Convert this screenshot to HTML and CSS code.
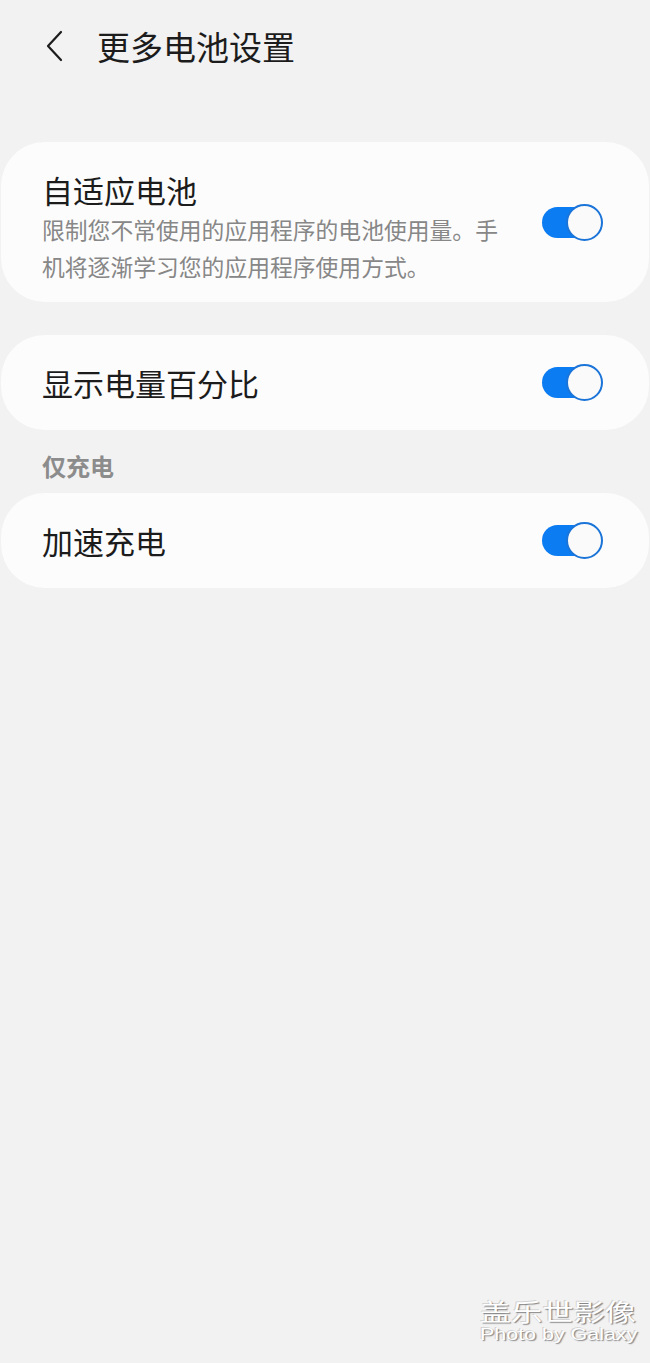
FILE: index.html
```html
<!DOCTYPE html>
<html lang="zh-CN">
<head>
    <meta charset="UTF-8">
    <meta name="viewport" content="width=device-width, initial-scale=1.0">
    <title>更多电池设置</title>
    <link rel="stylesheet" href="styles.css">
</head>
<body>
    <div class="page">
        <div class="header">
            <svg class="back" width="18" height="32" viewBox="0 0 18 32">
                <path d="M16 2 L3 16 L16 30" fill="none" stroke="#1c1c1c" stroke-width="2.2" stroke-linecap="round" stroke-linejoin="round"/>
            </svg>
            <h1>更多电池设置</h1>
        </div>

        <div class="card card-tall">
            <div class="text">
                <div class="title">自适应电池</div>
                <div class="desc">限制您不常使用的应用程序的电池使用量。手机将逐渐学习您的应用程序使用方式。</div>
            </div>
            <span class="switch"><span class="knob"></span></span>
        </div>

        <div class="card">
            <div class="title">显示电量百分比</div>
            <span class="switch"><span class="knob"></span></span>
        </div>

        <div class="section">仅充电</div>

        <div class="card">
            <div class="title">加速充电</div>
            <span class="switch"><span class="knob"></span></span>
        </div>
    </div>

    <div class="watermark">
        <div class="wm-cn">盖乐世影像</div>
        <div class="wm-en">Photo by Galaxy</div>
    </div>
</body>
</html>
```

FILE: styles.css
```css
body { margin: 0; background: #f2f2f2; font-family: "Noto Sans CJK SC", "Noto Sans", sans-serif; color: #1c1c1c; height: 1363px; overflow: hidden; position: relative; }
.page { padding: 0 1px; }
.header { height: 92px; padding-bottom: 4px; display: flex; align-items: center; padding-left: 44px; }
.header h1 { margin: 0 0 0 34px; font-size: 33px; font-weight: 400; line-height: 40px; }

.card { background: #fcfcfc; border-radius: 44px; display: flex; align-items: center; justify-content: space-between; padding: 0 46px 0 41px; height: 95px; margin-bottom: 33px; }
.card-tall { height: 160px; margin-top: 46px; }
.text { padding-top: 11px; }
.title { font-size: 31px; line-height: 40px; }
.desc { font-size: 22.8px; line-height: 37px; color: #878787; max-width: 470px; margin-top: 1px; }

.section { font-size: 24px; line-height: 30px; color: #8c8c8c; padding-left: 41px; margin: -12px 0 12px; font-weight: 700; }

.switch { position: relative; width: 61px; height: 37px; flex-shrink: 0; }
.switch::before { content: ""; position: absolute; left: 0; top: 3px; width: 50px; height: 31px; border-radius: 16px; background: #0b7cf2; }
.knob { position: absolute; right: 0; top: 0; width: 33px; height: 33px; border-radius: 50%; background: #fafafa; border: 2px solid #1b74d8; }

.watermark { position: absolute; left: 480px; top: 1296px; width: 120px; white-space: nowrap; color: #fff; text-shadow: 1px 1px 1px rgba(0,0,0,0.45), -1px -1px 0 rgba(0,0,0,0.12); }
.wm-cn { font-size: 24px; line-height: 30px; transform: scaleX(1.3); transform-origin: left center; }
.wm-en { font-family: "Liberation Sans", sans-serif; font-size: 16px; line-height: 18px; transform: scaleX(1.34); transform-origin: left center; }
```
